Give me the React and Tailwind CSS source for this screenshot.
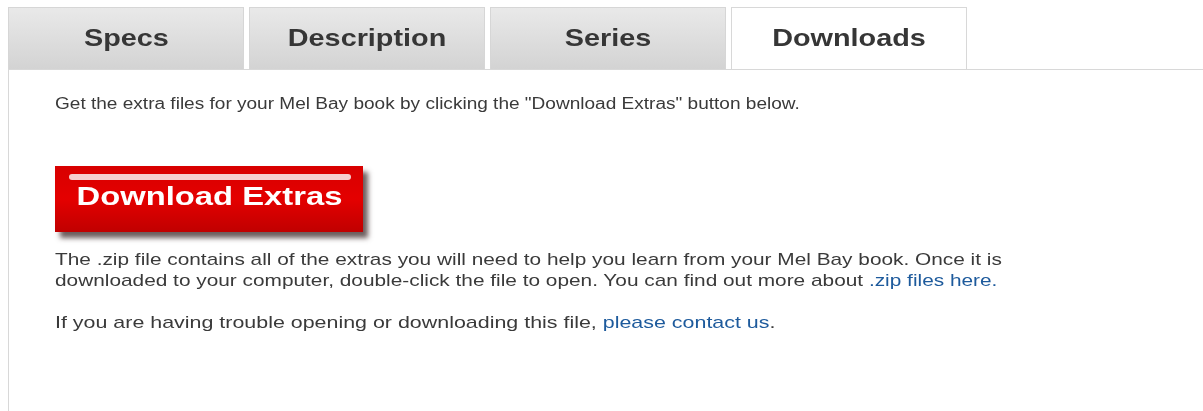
import React from 'react';

const tabs = ['Specs', 'Description', 'Series', 'Downloads'];

// the old page renders its type noticeably wide, so lines get a horizontal stretch
const Line = ({ children, className = 'scale-x-[1.19]' }) => (
  <span className={`block w-max origin-left ${className}`}>{children}</span>
);

const Tab = ({ label, active }) => (
  <div
    className={
      active
        ? 'w-[236px] h-[62px] flex items-center justify-center bg-white border border-[#d8d8d8] border-b-0 -mb-px relative z-10'
        : 'w-[236px] h-[62px] flex items-center justify-center bg-gradient-to-b from-[#e9e9e9] to-[#d3d3d3] border border-[#d6d6d6] border-b-0'
    }
  >
    <span className="inline-block scale-x-[1.2] text-[24px] font-bold text-[#363636] -mt-[2px]">{label}</span>
  </div>
);

const DownloadButton = () => (
  <button className="relative mt-[52px] w-[308px] h-[66px] bg-gradient-to-b from-[#d80000] via-[#e40000] to-[#c00000] shadow-[5px_6px_5px_rgba(60,40,40,0.75)] flex items-start justify-center pt-[17px]">
    <span className="absolute left-[14px] right-[12px] top-[8px] h-[6px] rounded-full bg-[#f6cfcf] blur-[0.5px]" />
    <span className="inline-block scale-x-[1.26] text-[26px] font-bold text-white leading-none">Download Extras</span>
  </button>
);

export default function App() {
  return (
    <div className="w-[1203px] h-[411px] bg-white pt-[7px] pl-[8px] font-['Liberation_Sans',Arial,sans-serif] overflow-hidden">
      <div className="flex gap-[5px]">
        {tabs.map((t) => (
          <Tab key={t} label={t} active={t === 'Downloads'} />
        ))}
      </div>
      <div className="border-l border-t border-[#d8d8d8] h-[360px] pl-[46px] pt-[24px] text-[16px] text-[#3a3a3a]">
        <div className="leading-[20px]">
          <Line>Get the extra files for your Mel Bay book by clicking the "Download Extras" button below.</Line>
        </div>
        <DownloadButton />
        <div className="mt-[17px] leading-[21px] text-[17px]">
          <Line className="scale-x-[1.225]">
            The .zip file contains all of the extras you will need to help you learn from your Mel Bay book. Once it is
          </Line>
          <Line className="scale-x-[1.225]">
            downloaded to your computer, double-click the file to open. You can find out more about{' '}
            <a className="text-[#1d5a9c]">.zip files here.</a>
          </Line>
        </div>
        <div className="mt-[22px] leading-[20px] text-[17px]">
          <Line className="scale-x-[1.26]">
            If you are having trouble opening or downloading this file,{' '}
            <a className="text-[#1d5a9c]">please contact us</a>.
          </Line>
        </div>
      </div>
    </div>
  );
}
